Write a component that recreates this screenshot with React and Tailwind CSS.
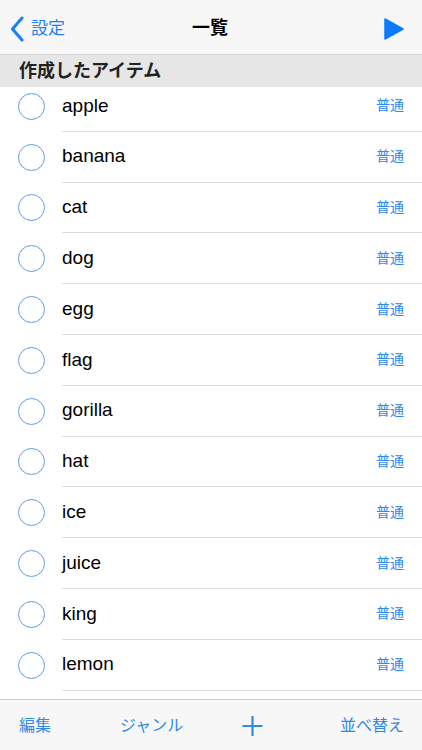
import React from 'react';

const items = ['apple', 'banana', 'cat', 'dog', 'egg', 'flag', 'gorilla', 'hat', 'ice', 'juice', 'king', 'lemon'];

const font = { fontFamily: '"Liberation Sans", "Noto Sans CJK JP", sans-serif' };

const Row = ({ name }) => (
  <div className="flex h-[50.8px] items-center bg-white">
    <div className="flex w-[62px] shrink-0 items-center pl-[18px]">
      <div className="h-[27px] w-[27px] rounded-full border-[1.5px] border-[#5f9de4]" />
    </div>
    <div className="flex h-full flex-1 items-center border-b border-[#dedede] pr-[18px]">
      <span className="flex-1 text-[19px] text-black">{name}</span>
      <span className="text-[14px] text-[#2f8af0]">普通</span>
    </div>
  </div>
);

export default function App() {
  return (
    <div className="flex h-[750px] w-[422px] flex-col overflow-hidden bg-white" style={font}>
      <header className="relative z-10 flex h-[55px] shrink-0 items-center border-b border-[#d4d4d4] bg-[#f7f7f7] px-[10px] pt-[3px]">
        <div className="flex flex-1 items-center gap-[7px] text-[#1f80f5]">
          <svg width="14" height="26" viewBox="0 0 14 26" fill="none">
            <path d="M12 2 L2.5 13 L12 24" stroke="#1a7ef7" strokeWidth="3" strokeLinecap="round" strokeLinejoin="round" />
          </svg>
          <span className="text-[17px]">設定</span>
        </div>
        <div className="pl-[6px] text-[18px] font-bold text-black">一覧</div>
        <div className="flex flex-1 justify-end pr-[8px]">
          <svg width="20" height="22" viewBox="0 0 20 22">
            <path d="M1 1 L19 11 L1 21 Z" fill="#0a7bff" stroke="#0a7bff" strokeWidth="1.5" strokeLinejoin="round" />
          </svg>
        </div>
      </header>

      <div className="relative z-10 flex h-[32px] shrink-0 items-center bg-[#e6e6e6] px-[19px]">
        <span className="text-[18px] font-bold text-[#222]">作成したアイテム</span>
      </div>

      <main className="flex-1 overflow-hidden">
        <div className="-mt-[6px]">
          {items.map((name) => (
            <Row key={name} name={name} />
          ))}
        </div>
      </main>

      <footer className="flex h-[51px] shrink-0 items-center border-t border-[#d0d0d0] bg-[#f7f7f7] pl-[19px] pr-[18px] pt-[2px] text-[16px] text-[#2f88ea]">
        <span className="w-[101px] shrink-0 whitespace-nowrap">編集</span>
        <span className="w-[122px] shrink-0 whitespace-nowrap">ジャンル</span>
        <svg width="21" height="22" viewBox="0 0 21 22" className="shrink-0">
          <path d="M10.5 1 V21 M0.5 11 H20.5" stroke="#2f88ea" strokeWidth="2.2" />
        </svg>
        <span className="flex-1 whitespace-nowrap text-right">並べ替え</span>
      </footer>
    </div>
  );
}
